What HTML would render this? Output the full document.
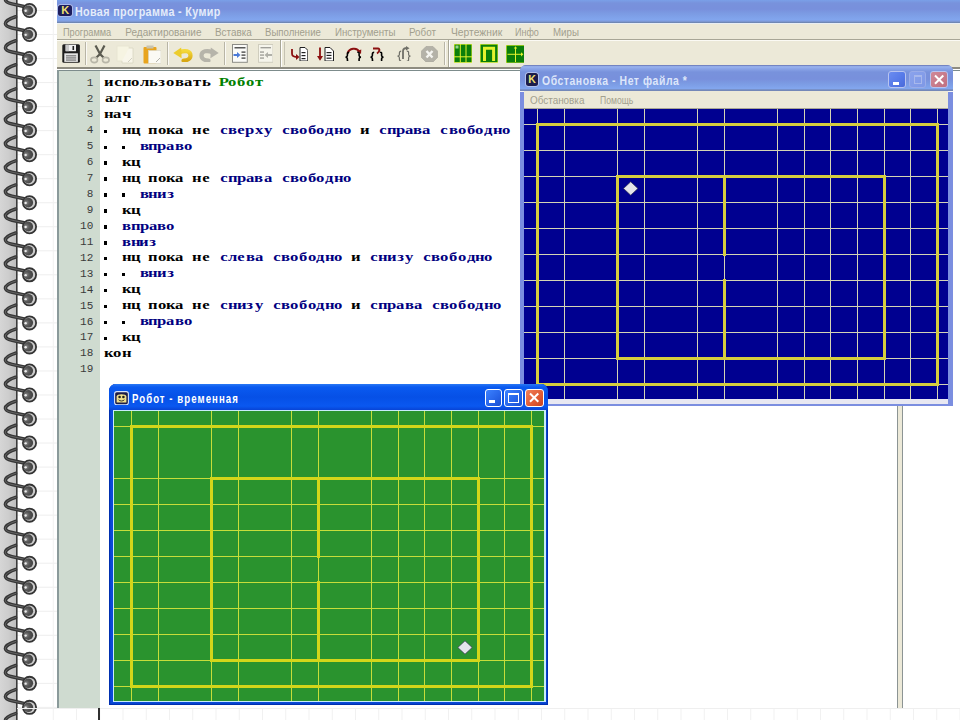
<!DOCTYPE html>
<html><head><meta charset="utf-8">
<style>
html,body{margin:0;padding:0;}
body{width:960px;height:720px;position:relative;overflow:hidden;background:#fff;font-family:"Liberation Sans",sans-serif;}
.a{position:absolute;}
.mt{left:57px;top:0;width:903px;height:23.6px;background:linear-gradient(to bottom,#7aa0e8 0px,#7892dc 3px,#7890dc 9px,#7c9ce4 14px,#82a6ee 20px,#7c96d0 21.6px,#6e86b0 22.6px,#e8eef4 22.7px,#e8eef4 23.6px);}
.ttl{color:#e4ecfa;font-weight:bold;white-space:nowrap;}
.menu{background:#ece9d8;}
.mi{color:#a29f8e;font-size:10px;white-space:nowrap;}
.sx{transform-origin:0 50%;}
.tb{background:#ece9d8;}
.code{font-family:"Liberation Serif",serif;font-weight:bold;font-size:12.8px;white-space:pre;color:#000;}
.c{display:inline-block;width:8.83px;text-align:center;font-style:normal;}
.c b{display:inline-block;transform:scaleX(1.3);font-weight:bold;}
.code div{position:absolute;left:0;height:16px;}
.k{color:#000080;}
.g{color:#008000;}
.ln{font-family:"Liberation Mono",monospace;font-size:11px;color:#3a3a3a;text-align:right;white-space:pre;}
.ln div{position:absolute;right:0;}
.c b.bl{width:3px;height:3.4px;background:#000;vertical-align:1px;transform:none;}
.cb{text-align:left;}
</style></head><body>
<svg width="960" height="720" style="position:absolute;left:0;top:0">
<defs><linearGradient id="gstrip" x1="0" x2="1" y1="0" y2="0"><stop offset="0" stop-color="#d6d6d6"/><stop offset="0.5" stop-color="#cdcdcd"/><stop offset="1" stop-color="#bcbcbc"/></linearGradient><radialGradient id="hole" cx="0.3" cy="0.5" r="0.75"><stop offset="0" stop-color="#8c8c8c"/><stop offset="0.4" stop-color="#585858"/><stop offset="1" stop-color="#3c3c3c"/></radialGradient></defs>
<rect x="0" y="0" width="17" height="720" fill="url(#gstrip)"/>
<rect x="17" y="10" width="943" height="1" fill="#eeeeee"/>
<rect x="17" y="34.03" width="943" height="1" fill="#eeeeee"/>
<rect x="17" y="58.06" width="943" height="1" fill="#eeeeee"/>
<rect x="17" y="82.09" width="943" height="1" fill="#eeeeee"/>
<rect x="17" y="106.12" width="943" height="1" fill="#eeeeee"/>
<rect x="17" y="130.15" width="943" height="1" fill="#eeeeee"/>
<rect x="17" y="154.18" width="943" height="1" fill="#eeeeee"/>
<rect x="17" y="178.21" width="943" height="1" fill="#eeeeee"/>
<rect x="17" y="202.24" width="943" height="1" fill="#eeeeee"/>
<rect x="17" y="226.27" width="943" height="1" fill="#eeeeee"/>
<rect x="17" y="250.3" width="943" height="1" fill="#eeeeee"/>
<rect x="17" y="274.33" width="943" height="1" fill="#eeeeee"/>
<rect x="17" y="298.36" width="943" height="1" fill="#eeeeee"/>
<rect x="17" y="322.39" width="943" height="1" fill="#eeeeee"/>
<rect x="17" y="346.42" width="943" height="1" fill="#eeeeee"/>
<rect x="17" y="370.45" width="943" height="1" fill="#eeeeee"/>
<rect x="17" y="394.48" width="943" height="1" fill="#eeeeee"/>
<rect x="17" y="418.51" width="943" height="1" fill="#eeeeee"/>
<rect x="17" y="442.54" width="943" height="1" fill="#eeeeee"/>
<rect x="17" y="466.57" width="943" height="1" fill="#eeeeee"/>
<rect x="17" y="490.6" width="943" height="1" fill="#eeeeee"/>
<rect x="17" y="514.63" width="943" height="1" fill="#eeeeee"/>
<rect x="17" y="538.66" width="943" height="1" fill="#eeeeee"/>
<rect x="17" y="562.69" width="943" height="1" fill="#eeeeee"/>
<rect x="17" y="586.72" width="943" height="1" fill="#eeeeee"/>
<rect x="17" y="610.75" width="943" height="1" fill="#eeeeee"/>
<rect x="17" y="634.78" width="943" height="1" fill="#eeeeee"/>
<rect x="17" y="658.81" width="943" height="1" fill="#eeeeee"/>
<rect x="17" y="682.84" width="943" height="1" fill="#eeeeee"/>
<rect x="17" y="706.87" width="943" height="1" fill="#eeeeee"/>
<rect x="52.75" y="0" width="1" height="720" fill="#f1f1f1"/>
<rect x="76" y="0" width="1" height="720" fill="#f1f1f1"/>
<rect x="99.25" y="0" width="1" height="720" fill="#f1f1f1"/>
<rect x="122.5" y="0" width="1" height="720" fill="#f1f1f1"/>
<rect x="145.75" y="0" width="1" height="720" fill="#f1f1f1"/>
<rect x="169" y="0" width="1" height="720" fill="#f1f1f1"/>
<rect x="192.25" y="0" width="1" height="720" fill="#f1f1f1"/>
<rect x="215.5" y="0" width="1" height="720" fill="#f1f1f1"/>
<rect x="238.75" y="0" width="1" height="720" fill="#f1f1f1"/>
<rect x="262" y="0" width="1" height="720" fill="#f1f1f1"/>
<rect x="285.25" y="0" width="1" height="720" fill="#f1f1f1"/>
<rect x="308.5" y="0" width="1" height="720" fill="#f1f1f1"/>
<rect x="331.75" y="0" width="1" height="720" fill="#f1f1f1"/>
<rect x="355" y="0" width="1" height="720" fill="#f1f1f1"/>
<rect x="378.25" y="0" width="1" height="720" fill="#f1f1f1"/>
<rect x="401.5" y="0" width="1" height="720" fill="#f1f1f1"/>
<rect x="424.75" y="0" width="1" height="720" fill="#f1f1f1"/>
<rect x="448" y="0" width="1" height="720" fill="#f1f1f1"/>
<rect x="471.25" y="0" width="1" height="720" fill="#f1f1f1"/>
<rect x="494.5" y="0" width="1" height="720" fill="#f1f1f1"/>
<rect x="517.75" y="0" width="1" height="720" fill="#f1f1f1"/>
<rect x="541" y="0" width="1" height="720" fill="#f1f1f1"/>
<rect x="564.25" y="0" width="1" height="720" fill="#f1f1f1"/>
<rect x="587.5" y="0" width="1" height="720" fill="#f1f1f1"/>
<rect x="610.75" y="0" width="1" height="720" fill="#f1f1f1"/>
<rect x="634" y="0" width="1" height="720" fill="#f1f1f1"/>
<rect x="657.25" y="0" width="1" height="720" fill="#f1f1f1"/>
<rect x="680.5" y="0" width="1" height="720" fill="#f1f1f1"/>
<rect x="703.75" y="0" width="1" height="720" fill="#f1f1f1"/>
<rect x="727" y="0" width="1" height="720" fill="#f1f1f1"/>
<rect x="750.25" y="0" width="1" height="720" fill="#f1f1f1"/>
<rect x="773.5" y="0" width="1" height="720" fill="#f1f1f1"/>
<rect x="796.75" y="0" width="1" height="720" fill="#f1f1f1"/>
<rect x="820" y="0" width="1" height="720" fill="#f1f1f1"/>
<rect x="843.25" y="0" width="1" height="720" fill="#f1f1f1"/>
<rect x="866.5" y="0" width="1" height="720" fill="#f1f1f1"/>
<rect x="889.75" y="0" width="1" height="720" fill="#f1f1f1"/>
<rect x="913" y="0" width="1" height="720" fill="#f1f1f1"/>
<rect x="936.25" y="0" width="1" height="720" fill="#f1f1f1"/>
<rect x="959.5" y="0" width="1" height="720" fill="#f1f1f1"/>
<rect x="16" y="0" width="1.6" height="720" fill="#3a3a3a"/>
<path d="M15.6 -7.3 C 11 -5.9, 5.2 -3.1, 5.4 -0.3 C 5.6 2.3, 8.5 3.1, 12 3.9 L 24 6.5" fill="none" stroke="#363636" stroke-width="3.5" stroke-linecap="round"/>
<path d="M15.6 -7.3 C 11 -5.9, 5.2 -3.1, 5.4 -0.3 C 5.6 2.3, 8.5 3.1, 12 3.9 L 24 6.5" fill="none" stroke="#7a7a7a" stroke-width="0.7" stroke-linecap="round"/>
<circle cx="29.5" cy="10.5" r="6.6" fill="#cccccc" stroke="#343434" stroke-width="1.8"/>
<circle cx="28.3" cy="10.4" r="4.8" fill="url(#hole)"/>
<circle cx="25.6" cy="10.8" r="1.2" fill="#ececec"/>
<path d="M15.6 16.73 C 11 18.13, 5.2 20.93, 5.4 23.73 C 5.6 26.33, 8.5 27.13, 12 27.93 L 24 30.53" fill="none" stroke="#363636" stroke-width="3.5" stroke-linecap="round"/>
<path d="M15.6 16.73 C 11 18.13, 5.2 20.93, 5.4 23.73 C 5.6 26.33, 8.5 27.13, 12 27.93 L 24 30.53" fill="none" stroke="#7a7a7a" stroke-width="0.7" stroke-linecap="round"/>
<circle cx="29.5" cy="34.53" r="6.6" fill="#cccccc" stroke="#343434" stroke-width="1.8"/>
<circle cx="28.3" cy="34.43" r="4.8" fill="url(#hole)"/>
<circle cx="25.6" cy="34.83" r="1.2" fill="#ececec"/>
<path d="M15.6 40.76 C 11 42.16, 5.2 44.96, 5.4 47.76 C 5.6 50.36, 8.5 51.16, 12 51.96 L 24 54.56" fill="none" stroke="#363636" stroke-width="3.5" stroke-linecap="round"/>
<path d="M15.6 40.76 C 11 42.16, 5.2 44.96, 5.4 47.76 C 5.6 50.36, 8.5 51.16, 12 51.96 L 24 54.56" fill="none" stroke="#7a7a7a" stroke-width="0.7" stroke-linecap="round"/>
<circle cx="29.5" cy="58.56" r="6.6" fill="#cccccc" stroke="#343434" stroke-width="1.8"/>
<circle cx="28.3" cy="58.46" r="4.8" fill="url(#hole)"/>
<circle cx="25.6" cy="58.86" r="1.2" fill="#ececec"/>
<path d="M15.6 64.79 C 11 66.19, 5.2 68.99, 5.4 71.79 C 5.6 74.39, 8.5 75.19, 12 75.99 L 24 78.59" fill="none" stroke="#363636" stroke-width="3.5" stroke-linecap="round"/>
<path d="M15.6 64.79 C 11 66.19, 5.2 68.99, 5.4 71.79 C 5.6 74.39, 8.5 75.19, 12 75.99 L 24 78.59" fill="none" stroke="#7a7a7a" stroke-width="0.7" stroke-linecap="round"/>
<circle cx="29.5" cy="82.59" r="6.6" fill="#cccccc" stroke="#343434" stroke-width="1.8"/>
<circle cx="28.3" cy="82.49" r="4.8" fill="url(#hole)"/>
<circle cx="25.6" cy="82.89" r="1.2" fill="#ececec"/>
<path d="M15.6 88.82 C 11 90.22, 5.2 93.02, 5.4 95.82 C 5.6 98.42, 8.5 99.22, 12 100.02 L 24 102.62" fill="none" stroke="#363636" stroke-width="3.5" stroke-linecap="round"/>
<path d="M15.6 88.82 C 11 90.22, 5.2 93.02, 5.4 95.82 C 5.6 98.42, 8.5 99.22, 12 100.02 L 24 102.62" fill="none" stroke="#7a7a7a" stroke-width="0.7" stroke-linecap="round"/>
<circle cx="29.5" cy="106.62" r="6.6" fill="#cccccc" stroke="#343434" stroke-width="1.8"/>
<circle cx="28.3" cy="106.52" r="4.8" fill="url(#hole)"/>
<circle cx="25.6" cy="106.92" r="1.2" fill="#ececec"/>
<path d="M15.6 112.85 C 11 114.25, 5.2 117.05, 5.4 119.85 C 5.6 122.45, 8.5 123.25, 12 124.05 L 24 126.65" fill="none" stroke="#363636" stroke-width="3.5" stroke-linecap="round"/>
<path d="M15.6 112.85 C 11 114.25, 5.2 117.05, 5.4 119.85 C 5.6 122.45, 8.5 123.25, 12 124.05 L 24 126.65" fill="none" stroke="#7a7a7a" stroke-width="0.7" stroke-linecap="round"/>
<circle cx="29.5" cy="130.65" r="6.6" fill="#cccccc" stroke="#343434" stroke-width="1.8"/>
<circle cx="28.3" cy="130.55" r="4.8" fill="url(#hole)"/>
<circle cx="25.6" cy="130.95" r="1.2" fill="#ececec"/>
<path d="M15.6 136.88 C 11 138.28, 5.2 141.08, 5.4 143.88 C 5.6 146.48, 8.5 147.28, 12 148.08 L 24 150.68" fill="none" stroke="#363636" stroke-width="3.5" stroke-linecap="round"/>
<path d="M15.6 136.88 C 11 138.28, 5.2 141.08, 5.4 143.88 C 5.6 146.48, 8.5 147.28, 12 148.08 L 24 150.68" fill="none" stroke="#7a7a7a" stroke-width="0.7" stroke-linecap="round"/>
<circle cx="29.5" cy="154.68" r="6.6" fill="#cccccc" stroke="#343434" stroke-width="1.8"/>
<circle cx="28.3" cy="154.58" r="4.8" fill="url(#hole)"/>
<circle cx="25.6" cy="154.98" r="1.2" fill="#ececec"/>
<path d="M15.6 160.91 C 11 162.31, 5.2 165.11, 5.4 167.91 C 5.6 170.51, 8.5 171.31, 12 172.11 L 24 174.71" fill="none" stroke="#363636" stroke-width="3.5" stroke-linecap="round"/>
<path d="M15.6 160.91 C 11 162.31, 5.2 165.11, 5.4 167.91 C 5.6 170.51, 8.5 171.31, 12 172.11 L 24 174.71" fill="none" stroke="#7a7a7a" stroke-width="0.7" stroke-linecap="round"/>
<circle cx="29.5" cy="178.71" r="6.6" fill="#cccccc" stroke="#343434" stroke-width="1.8"/>
<circle cx="28.3" cy="178.61" r="4.8" fill="url(#hole)"/>
<circle cx="25.6" cy="179.01" r="1.2" fill="#ececec"/>
<path d="M15.6 184.94 C 11 186.34, 5.2 189.14, 5.4 191.94 C 5.6 194.54, 8.5 195.34, 12 196.14 L 24 198.74" fill="none" stroke="#363636" stroke-width="3.5" stroke-linecap="round"/>
<path d="M15.6 184.94 C 11 186.34, 5.2 189.14, 5.4 191.94 C 5.6 194.54, 8.5 195.34, 12 196.14 L 24 198.74" fill="none" stroke="#7a7a7a" stroke-width="0.7" stroke-linecap="round"/>
<circle cx="29.5" cy="202.74" r="6.6" fill="#cccccc" stroke="#343434" stroke-width="1.8"/>
<circle cx="28.3" cy="202.64" r="4.8" fill="url(#hole)"/>
<circle cx="25.6" cy="203.04" r="1.2" fill="#ececec"/>
<path d="M15.6 208.97 C 11 210.37, 5.2 213.17, 5.4 215.97 C 5.6 218.57, 8.5 219.37, 12 220.17 L 24 222.77" fill="none" stroke="#363636" stroke-width="3.5" stroke-linecap="round"/>
<path d="M15.6 208.97 C 11 210.37, 5.2 213.17, 5.4 215.97 C 5.6 218.57, 8.5 219.37, 12 220.17 L 24 222.77" fill="none" stroke="#7a7a7a" stroke-width="0.7" stroke-linecap="round"/>
<circle cx="29.5" cy="226.77" r="6.6" fill="#cccccc" stroke="#343434" stroke-width="1.8"/>
<circle cx="28.3" cy="226.67" r="4.8" fill="url(#hole)"/>
<circle cx="25.6" cy="227.07" r="1.2" fill="#ececec"/>
<path d="M15.6 233 C 11 234.4, 5.2 237.2, 5.4 240 C 5.6 242.6, 8.5 243.4, 12 244.2 L 24 246.8" fill="none" stroke="#363636" stroke-width="3.5" stroke-linecap="round"/>
<path d="M15.6 233 C 11 234.4, 5.2 237.2, 5.4 240 C 5.6 242.6, 8.5 243.4, 12 244.2 L 24 246.8" fill="none" stroke="#7a7a7a" stroke-width="0.7" stroke-linecap="round"/>
<circle cx="29.5" cy="250.8" r="6.6" fill="#cccccc" stroke="#343434" stroke-width="1.8"/>
<circle cx="28.3" cy="250.7" r="4.8" fill="url(#hole)"/>
<circle cx="25.6" cy="251.1" r="1.2" fill="#ececec"/>
<path d="M15.6 257.03 C 11 258.43, 5.2 261.23, 5.4 264.03 C 5.6 266.63, 8.5 267.43, 12 268.23 L 24 270.83" fill="none" stroke="#363636" stroke-width="3.5" stroke-linecap="round"/>
<path d="M15.6 257.03 C 11 258.43, 5.2 261.23, 5.4 264.03 C 5.6 266.63, 8.5 267.43, 12 268.23 L 24 270.83" fill="none" stroke="#7a7a7a" stroke-width="0.7" stroke-linecap="round"/>
<circle cx="29.5" cy="274.83" r="6.6" fill="#cccccc" stroke="#343434" stroke-width="1.8"/>
<circle cx="28.3" cy="274.73" r="4.8" fill="url(#hole)"/>
<circle cx="25.6" cy="275.13" r="1.2" fill="#ececec"/>
<path d="M15.6 281.06 C 11 282.46, 5.2 285.26, 5.4 288.06 C 5.6 290.66, 8.5 291.46, 12 292.26 L 24 294.86" fill="none" stroke="#363636" stroke-width="3.5" stroke-linecap="round"/>
<path d="M15.6 281.06 C 11 282.46, 5.2 285.26, 5.4 288.06 C 5.6 290.66, 8.5 291.46, 12 292.26 L 24 294.86" fill="none" stroke="#7a7a7a" stroke-width="0.7" stroke-linecap="round"/>
<circle cx="29.5" cy="298.86" r="6.6" fill="#cccccc" stroke="#343434" stroke-width="1.8"/>
<circle cx="28.3" cy="298.76" r="4.8" fill="url(#hole)"/>
<circle cx="25.6" cy="299.16" r="1.2" fill="#ececec"/>
<path d="M15.6 305.09 C 11 306.49, 5.2 309.29, 5.4 312.09 C 5.6 314.69, 8.5 315.49, 12 316.29 L 24 318.89" fill="none" stroke="#363636" stroke-width="3.5" stroke-linecap="round"/>
<path d="M15.6 305.09 C 11 306.49, 5.2 309.29, 5.4 312.09 C 5.6 314.69, 8.5 315.49, 12 316.29 L 24 318.89" fill="none" stroke="#7a7a7a" stroke-width="0.7" stroke-linecap="round"/>
<circle cx="29.5" cy="322.89" r="6.6" fill="#cccccc" stroke="#343434" stroke-width="1.8"/>
<circle cx="28.3" cy="322.79" r="4.8" fill="url(#hole)"/>
<circle cx="25.6" cy="323.19" r="1.2" fill="#ececec"/>
<path d="M15.6 329.12 C 11 330.52, 5.2 333.32, 5.4 336.12 C 5.6 338.72, 8.5 339.52, 12 340.32 L 24 342.92" fill="none" stroke="#363636" stroke-width="3.5" stroke-linecap="round"/>
<path d="M15.6 329.12 C 11 330.52, 5.2 333.32, 5.4 336.12 C 5.6 338.72, 8.5 339.52, 12 340.32 L 24 342.92" fill="none" stroke="#7a7a7a" stroke-width="0.7" stroke-linecap="round"/>
<circle cx="29.5" cy="346.92" r="6.6" fill="#cccccc" stroke="#343434" stroke-width="1.8"/>
<circle cx="28.3" cy="346.82" r="4.8" fill="url(#hole)"/>
<circle cx="25.6" cy="347.22" r="1.2" fill="#ececec"/>
<path d="M15.6 353.15 C 11 354.55, 5.2 357.35, 5.4 360.15 C 5.6 362.75, 8.5 363.55, 12 364.35 L 24 366.95" fill="none" stroke="#363636" stroke-width="3.5" stroke-linecap="round"/>
<path d="M15.6 353.15 C 11 354.55, 5.2 357.35, 5.4 360.15 C 5.6 362.75, 8.5 363.55, 12 364.35 L 24 366.95" fill="none" stroke="#7a7a7a" stroke-width="0.7" stroke-linecap="round"/>
<circle cx="29.5" cy="370.95" r="6.6" fill="#cccccc" stroke="#343434" stroke-width="1.8"/>
<circle cx="28.3" cy="370.85" r="4.8" fill="url(#hole)"/>
<circle cx="25.6" cy="371.25" r="1.2" fill="#ececec"/>
<path d="M15.6 377.18 C 11 378.58, 5.2 381.38, 5.4 384.18 C 5.6 386.78, 8.5 387.58, 12 388.38 L 24 390.98" fill="none" stroke="#363636" stroke-width="3.5" stroke-linecap="round"/>
<path d="M15.6 377.18 C 11 378.58, 5.2 381.38, 5.4 384.18 C 5.6 386.78, 8.5 387.58, 12 388.38 L 24 390.98" fill="none" stroke="#7a7a7a" stroke-width="0.7" stroke-linecap="round"/>
<circle cx="29.5" cy="394.98" r="6.6" fill="#cccccc" stroke="#343434" stroke-width="1.8"/>
<circle cx="28.3" cy="394.88" r="4.8" fill="url(#hole)"/>
<circle cx="25.6" cy="395.28" r="1.2" fill="#ececec"/>
<path d="M15.6 401.21 C 11 402.61, 5.2 405.41, 5.4 408.21 C 5.6 410.81, 8.5 411.61, 12 412.41 L 24 415.01" fill="none" stroke="#363636" stroke-width="3.5" stroke-linecap="round"/>
<path d="M15.6 401.21 C 11 402.61, 5.2 405.41, 5.4 408.21 C 5.6 410.81, 8.5 411.61, 12 412.41 L 24 415.01" fill="none" stroke="#7a7a7a" stroke-width="0.7" stroke-linecap="round"/>
<circle cx="29.5" cy="419.01" r="6.6" fill="#cccccc" stroke="#343434" stroke-width="1.8"/>
<circle cx="28.3" cy="418.91" r="4.8" fill="url(#hole)"/>
<circle cx="25.6" cy="419.31" r="1.2" fill="#ececec"/>
<path d="M15.6 425.24 C 11 426.64, 5.2 429.44, 5.4 432.24 C 5.6 434.84, 8.5 435.64, 12 436.44 L 24 439.04" fill="none" stroke="#363636" stroke-width="3.5" stroke-linecap="round"/>
<path d="M15.6 425.24 C 11 426.64, 5.2 429.44, 5.4 432.24 C 5.6 434.84, 8.5 435.64, 12 436.44 L 24 439.04" fill="none" stroke="#7a7a7a" stroke-width="0.7" stroke-linecap="round"/>
<circle cx="29.5" cy="443.04" r="6.6" fill="#cccccc" stroke="#343434" stroke-width="1.8"/>
<circle cx="28.3" cy="442.94" r="4.8" fill="url(#hole)"/>
<circle cx="25.6" cy="443.34" r="1.2" fill="#ececec"/>
<path d="M15.6 449.27 C 11 450.67, 5.2 453.47, 5.4 456.27 C 5.6 458.87, 8.5 459.67, 12 460.47 L 24 463.07" fill="none" stroke="#363636" stroke-width="3.5" stroke-linecap="round"/>
<path d="M15.6 449.27 C 11 450.67, 5.2 453.47, 5.4 456.27 C 5.6 458.87, 8.5 459.67, 12 460.47 L 24 463.07" fill="none" stroke="#7a7a7a" stroke-width="0.7" stroke-linecap="round"/>
<circle cx="29.5" cy="467.07" r="6.6" fill="#cccccc" stroke="#343434" stroke-width="1.8"/>
<circle cx="28.3" cy="466.97" r="4.8" fill="url(#hole)"/>
<circle cx="25.6" cy="467.37" r="1.2" fill="#ececec"/>
<path d="M15.6 473.3 C 11 474.7, 5.2 477.5, 5.4 480.3 C 5.6 482.9, 8.5 483.7, 12 484.5 L 24 487.1" fill="none" stroke="#363636" stroke-width="3.5" stroke-linecap="round"/>
<path d="M15.6 473.3 C 11 474.7, 5.2 477.5, 5.4 480.3 C 5.6 482.9, 8.5 483.7, 12 484.5 L 24 487.1" fill="none" stroke="#7a7a7a" stroke-width="0.7" stroke-linecap="round"/>
<circle cx="29.5" cy="491.1" r="6.6" fill="#cccccc" stroke="#343434" stroke-width="1.8"/>
<circle cx="28.3" cy="491" r="4.8" fill="url(#hole)"/>
<circle cx="25.6" cy="491.4" r="1.2" fill="#ececec"/>
<path d="M15.6 497.33 C 11 498.73, 5.2 501.53, 5.4 504.33 C 5.6 506.93, 8.5 507.73, 12 508.53 L 24 511.13" fill="none" stroke="#363636" stroke-width="3.5" stroke-linecap="round"/>
<path d="M15.6 497.33 C 11 498.73, 5.2 501.53, 5.4 504.33 C 5.6 506.93, 8.5 507.73, 12 508.53 L 24 511.13" fill="none" stroke="#7a7a7a" stroke-width="0.7" stroke-linecap="round"/>
<circle cx="29.5" cy="515.13" r="6.6" fill="#cccccc" stroke="#343434" stroke-width="1.8"/>
<circle cx="28.3" cy="515.03" r="4.8" fill="url(#hole)"/>
<circle cx="25.6" cy="515.43" r="1.2" fill="#ececec"/>
<path d="M15.6 521.36 C 11 522.76, 5.2 525.56, 5.4 528.36 C 5.6 530.96, 8.5 531.76, 12 532.56 L 24 535.16" fill="none" stroke="#363636" stroke-width="3.5" stroke-linecap="round"/>
<path d="M15.6 521.36 C 11 522.76, 5.2 525.56, 5.4 528.36 C 5.6 530.96, 8.5 531.76, 12 532.56 L 24 535.16" fill="none" stroke="#7a7a7a" stroke-width="0.7" stroke-linecap="round"/>
<circle cx="29.5" cy="539.16" r="6.6" fill="#cccccc" stroke="#343434" stroke-width="1.8"/>
<circle cx="28.3" cy="539.06" r="4.8" fill="url(#hole)"/>
<circle cx="25.6" cy="539.46" r="1.2" fill="#ececec"/>
<path d="M15.6 545.39 C 11 546.79, 5.2 549.59, 5.4 552.39 C 5.6 554.99, 8.5 555.79, 12 556.59 L 24 559.19" fill="none" stroke="#363636" stroke-width="3.5" stroke-linecap="round"/>
<path d="M15.6 545.39 C 11 546.79, 5.2 549.59, 5.4 552.39 C 5.6 554.99, 8.5 555.79, 12 556.59 L 24 559.19" fill="none" stroke="#7a7a7a" stroke-width="0.7" stroke-linecap="round"/>
<circle cx="29.5" cy="563.19" r="6.6" fill="#cccccc" stroke="#343434" stroke-width="1.8"/>
<circle cx="28.3" cy="563.09" r="4.8" fill="url(#hole)"/>
<circle cx="25.6" cy="563.49" r="1.2" fill="#ececec"/>
<path d="M15.6 569.42 C 11 570.82, 5.2 573.62, 5.4 576.42 C 5.6 579.02, 8.5 579.82, 12 580.62 L 24 583.22" fill="none" stroke="#363636" stroke-width="3.5" stroke-linecap="round"/>
<path d="M15.6 569.42 C 11 570.82, 5.2 573.62, 5.4 576.42 C 5.6 579.02, 8.5 579.82, 12 580.62 L 24 583.22" fill="none" stroke="#7a7a7a" stroke-width="0.7" stroke-linecap="round"/>
<circle cx="29.5" cy="587.22" r="6.6" fill="#cccccc" stroke="#343434" stroke-width="1.8"/>
<circle cx="28.3" cy="587.12" r="4.8" fill="url(#hole)"/>
<circle cx="25.6" cy="587.52" r="1.2" fill="#ececec"/>
<path d="M15.6 593.45 C 11 594.85, 5.2 597.65, 5.4 600.45 C 5.6 603.05, 8.5 603.85, 12 604.65 L 24 607.25" fill="none" stroke="#363636" stroke-width="3.5" stroke-linecap="round"/>
<path d="M15.6 593.45 C 11 594.85, 5.2 597.65, 5.4 600.45 C 5.6 603.05, 8.5 603.85, 12 604.65 L 24 607.25" fill="none" stroke="#7a7a7a" stroke-width="0.7" stroke-linecap="round"/>
<circle cx="29.5" cy="611.25" r="6.6" fill="#cccccc" stroke="#343434" stroke-width="1.8"/>
<circle cx="28.3" cy="611.15" r="4.8" fill="url(#hole)"/>
<circle cx="25.6" cy="611.55" r="1.2" fill="#ececec"/>
<path d="M15.6 617.48 C 11 618.88, 5.2 621.68, 5.4 624.48 C 5.6 627.08, 8.5 627.88, 12 628.68 L 24 631.28" fill="none" stroke="#363636" stroke-width="3.5" stroke-linecap="round"/>
<path d="M15.6 617.48 C 11 618.88, 5.2 621.68, 5.4 624.48 C 5.6 627.08, 8.5 627.88, 12 628.68 L 24 631.28" fill="none" stroke="#7a7a7a" stroke-width="0.7" stroke-linecap="round"/>
<circle cx="29.5" cy="635.28" r="6.6" fill="#cccccc" stroke="#343434" stroke-width="1.8"/>
<circle cx="28.3" cy="635.18" r="4.8" fill="url(#hole)"/>
<circle cx="25.6" cy="635.58" r="1.2" fill="#ececec"/>
<path d="M15.6 641.51 C 11 642.91, 5.2 645.71, 5.4 648.51 C 5.6 651.11, 8.5 651.91, 12 652.71 L 24 655.31" fill="none" stroke="#363636" stroke-width="3.5" stroke-linecap="round"/>
<path d="M15.6 641.51 C 11 642.91, 5.2 645.71, 5.4 648.51 C 5.6 651.11, 8.5 651.91, 12 652.71 L 24 655.31" fill="none" stroke="#7a7a7a" stroke-width="0.7" stroke-linecap="round"/>
<circle cx="29.5" cy="659.31" r="6.6" fill="#cccccc" stroke="#343434" stroke-width="1.8"/>
<circle cx="28.3" cy="659.21" r="4.8" fill="url(#hole)"/>
<circle cx="25.6" cy="659.61" r="1.2" fill="#ececec"/>
<path d="M15.6 665.54 C 11 666.94, 5.2 669.74, 5.4 672.54 C 5.6 675.14, 8.5 675.94, 12 676.74 L 24 679.34" fill="none" stroke="#363636" stroke-width="3.5" stroke-linecap="round"/>
<path d="M15.6 665.54 C 11 666.94, 5.2 669.74, 5.4 672.54 C 5.6 675.14, 8.5 675.94, 12 676.74 L 24 679.34" fill="none" stroke="#7a7a7a" stroke-width="0.7" stroke-linecap="round"/>
<circle cx="29.5" cy="683.34" r="6.6" fill="#cccccc" stroke="#343434" stroke-width="1.8"/>
<circle cx="28.3" cy="683.24" r="4.8" fill="url(#hole)"/>
<circle cx="25.6" cy="683.64" r="1.2" fill="#ececec"/>
<path d="M15.6 689.57 C 11 690.97, 5.2 693.77, 5.4 696.57 C 5.6 699.17, 8.5 699.97, 12 700.77 L 24 703.37" fill="none" stroke="#363636" stroke-width="3.5" stroke-linecap="round"/>
<path d="M15.6 689.57 C 11 690.97, 5.2 693.77, 5.4 696.57 C 5.6 699.17, 8.5 699.97, 12 700.77 L 24 703.37" fill="none" stroke="#7a7a7a" stroke-width="0.7" stroke-linecap="round"/>
<circle cx="29.5" cy="707.37" r="6.6" fill="#cccccc" stroke="#343434" stroke-width="1.8"/>
<circle cx="28.3" cy="707.27" r="4.8" fill="url(#hole)"/>
<circle cx="25.6" cy="707.67" r="1.2" fill="#ececec"/>
<path d="M15.6 713.6 C 11 715, 5.2 717.8, 5.4 720.6 C 5.6 723.2, 8.5 724, 12 724.8 L 24 727.4" fill="none" stroke="#363636" stroke-width="3.5" stroke-linecap="round"/>
<path d="M15.6 713.6 C 11 715, 5.2 717.8, 5.4 720.6 C 5.6 723.2, 8.5 724, 12 724.8 L 24 727.4" fill="none" stroke="#7a7a7a" stroke-width="0.7" stroke-linecap="round"/>
<circle cx="29.5" cy="731.4" r="6.6" fill="#cccccc" stroke="#343434" stroke-width="1.8"/>
<circle cx="28.3" cy="731.3" r="4.8" fill="url(#hole)"/>
<circle cx="25.6" cy="731.7" r="1.2" fill="#ececec"/>
</svg>

<!-- main window -->
<div class="a mt"></div>
<div class="a" style="left:58.4px;top:4.7px;width:13.9px;height:11.8px;background:#1c1c5c;border-radius:2.5px;box-shadow:0 0 0 0.8px #b8c4ec;"></div>
<div class="a" style="left:58.4px;top:3.6px;width:13.9px;text-align:center;font-size:11px;font-weight:bold;color:#f0e070;">K</div>

<div class="a menu" style="left:57px;top:23.6px;width:903px;height:15px;">
</div>
<div class="a" style="left:57px;top:38.5px;width:903px;height:1px;background:#a8a696;"></div>
<div class="a" style="left:57px;top:39.5px;width:903px;height:1px;background:#fbfaf4;"></div>

<div class="a tb" style="left:57px;top:40.5px;width:903px;height:27px;"></div>
<svg class="a" style="left:61.9px;top:44px" width="18.2" height="19" viewBox="0 0 18.2 19"><rect x="0.3" y="0.3" width="17.6" height="18.4" rx="1.5" fill="#1e1e1e"/><rect x="3.6" y="0.8" width="10.4" height="6.4" fill="#f0f0f0"/><rect x="3.6" y="0.8" width="3.4" height="6.4" fill="#c8c8c8"/><rect x="10.5" y="2" width="1.6" height="4" fill="#1e1e1e"/><rect x="2.3" y="9.3" width="13.6" height="8.6" fill="#e6e6e6"/><rect x="4" y="11.4" width="10.2" height="0.9" fill="#505050"/><rect x="4" y="13.5" width="10.2" height="0.9" fill="#505050"/><rect x="4" y="15.6" width="10.2" height="0.9" fill="#505050"/></svg>
<div class="a" style="left:84.8px;top:42px;width:1px;height:23px;background:#b8b5a6;"></div><div class="a" style="left:85.8px;top:42px;width:1px;height:23px;background:#fbfaf6;"></div>
<svg class="a" style="left:90px;top:44.9px" width="20" height="18.7" viewBox="0 0 20 18.7"><path d="M5.5 0.5 L10 9 L14.5 0.5" fill="none" stroke="#5a5a50" stroke-width="2.2"/><path d="M10 9 L6 13 M10 9 L14 13" stroke="#5a5a50" stroke-width="2.2"/><ellipse cx="4.2" cy="15" rx="3.3" ry="2.6" fill="none" stroke="#b8b6a8" stroke-width="1.6"/><ellipse cx="15.8" cy="15" rx="3.3" ry="2.6" fill="none" stroke="#b8b6a8" stroke-width="1.6"/></svg>
<svg class="a" style="left:116px;top:44.5px" width="19" height="19" viewBox="0 0 19 19"><rect x="1" y="1" width="12" height="15" fill="#f6f4e2" stroke="#e6e3d0" stroke-width="0.8"/><path d="M13 3 L17 3 L17 18 L6 18 L6 16" fill="#f8f6ea" stroke="#d8d5c2" stroke-width="0.8"/><path d="M12 17 L16 13" stroke="#c8c6b6" stroke-width="0.8"/></svg>
<svg class="a" style="left:142.5px;top:44.5px" width="18.5" height="19" viewBox="0 0 18.5 19"><rect x="0.5" y="2" width="13" height="16.5" rx="1" fill="#e8a41e"/><rect x="3.5" y="0.5" width="7" height="3" fill="#c8c4b0"/><rect x="5.5" y="5.5" width="12.5" height="13" fill="#fbfaf4" stroke="#d8d6c6" stroke-width="0.6"/><path d="M13 17 L17 13" stroke="#a0a098" stroke-width="0.8"/></svg>
<div class="a" style="left:167px;top:42px;width:1px;height:23px;background:#b8b5a6;"></div><div class="a" style="left:168px;top:42px;width:1px;height:23px;background:#fbfaf6;"></div>
<svg class="a" style="left:172.5px;top:46.5px" width="20.5" height="15.5" viewBox="0 0 20.5 15.5"><defs><linearGradient id="ug" x1="0" y1="0" x2="0" y2="1"><stop offset="0" stop-color="#f4d83a"/><stop offset="1" stop-color="#d8a814"/></linearGradient></defs><path d="M6.5 5.2 C 12 3, 17.5 4, 17.5 8.5 C 17.5 12, 14 13.5, 10.5 13.5" fill="none" stroke="url(#ug)" stroke-width="4.2" stroke-linecap="round"/><path d="M0.3 6 L8.2 0.6 L8.6 11.2 Z" fill="#eccc2c"/></svg>
<svg class="a" style="left:198.75px;top:46.5px" width="20" height="15.5" viewBox="0 0 20 15.5"><path d="M13.5 5.2 C 8 3, 2.5 4, 2.5 8.5 C 2.5 12, 6 13.5, 9.5 13.5" fill="none" stroke="#b6b4aa" stroke-width="4.2" stroke-linecap="round"/><path d="M19.7 6 L11.8 0.6 L11.4 11.2 Z" fill="#b6b4aa"/></svg>
<div class="a" style="left:224.25px;top:42px;width:1px;height:23px;background:#b8b5a6;"></div><div class="a" style="left:225.25px;top:42px;width:1px;height:23px;background:#fbfaf6;"></div>
<svg class="a" style="left:231.9px;top:44.25px" width="15.8" height="18.8" viewBox="0 0 15.8 18.8"><rect x="0.5" y="0.5" width="14.8" height="17.8" fill="#fbfbf8" stroke="#8c8c86" stroke-width="1"/><rect x="2.5" y="3.2" width="11" height="1.2" fill="#303030"/><rect x="9.5" y="7.5" width="4" height="1.2" fill="#303030"/><rect x="9.5" y="10.5" width="4" height="1.2" fill="#303030"/><rect x="9.5" y="13.5" width="4" height="1.2" fill="#303030"/><path d="M1.5 11 L6 11" stroke="#4a7ad8" stroke-width="2"/><path d="M5 8 L8.5 11 L5 14 Z" fill="#4a7ad8"/></svg>
<svg class="a" style="left:257.5px;top:44.25px" width="15.5" height="18.8" viewBox="0 0 15.5 18.8"><rect x="0.5" y="0.5" width="14.5" height="17.8" fill="#f6f5ec" stroke="#cfcdbe" stroke-width="1"/><rect x="2.5" y="3.2" width="10.5" height="1.1" fill="#8a8a84"/><rect x="2" y="7.5" width="4" height="1.1" fill="#8a8a84"/><rect x="2" y="10.5" width="4" height="1.1" fill="#8a8a84"/><rect x="2" y="13.5" width="4" height="1.1" fill="#8a8a84"/><path d="M9 11 L14 11" stroke="#b0b0a8" stroke-width="2"/><path d="M10 8 L6.5 11 L10 14 Z" fill="#b0b0a8"/></svg>
<div class="a" style="left:279.5px;top:40px;width:1px;height:27px;background:#a8a696;"></div><div class="a" style="left:280.5px;top:40px;width:1px;height:27px;background:#fff;"></div>
<div class="a" style="left:284px;top:42px;width:1px;height:23px;background:#c5c2b2;"></div>
<svg class="a" style="left:290.6px;top:46.5px" width="17.5" height="14.5" viewBox="0 0 17.5 14.5"><path d="M1 2 L1 6.5 C1 9, 3 10, 6 10" fill="none" stroke="#8c1010" stroke-width="1.8"/><path d="M5 7 L8.5 10 L5 13 Z" fill="#8c1010"/><path d="M9 0.5 L14 0.5 L16.8 3.3 L16.8 14 L9 14 Z" fill="#fff" stroke="#202020" stroke-width="1"/><rect x="10.5" y="5" width="4" height="1.2" fill="#202020"/><rect x="10.5" y="8" width="4" height="1.2" fill="#202020"/><rect x="10.5" y="11" width="4" height="1.2" fill="#202020"/></svg>
<svg class="a" style="left:316.9px;top:46.5px" width="17" height="14.5" viewBox="0 0 17 14.5"><path d="M3 0.5 L3 11" stroke="#8c1010" stroke-width="1.8"/><path d="M0 9 L3 13.8 L6 9 Z" fill="#8c1010"/><path d="M8 0.5 L13 0.5 L16.5 4 L16.5 14 L8 14 Z" fill="#fff" stroke="#202020" stroke-width="1"/><rect x="9.5" y="5" width="5" height="1.2" fill="#202020"/><rect x="9.5" y="7.8" width="5" height="1.2" fill="#202020"/><rect x="9.5" y="10.6" width="5" height="1.2" fill="#202020"/></svg>
<svg class="a" style="left:345px;top:46.5px" width="16.5" height="14.5" viewBox="0 0 16.5 14.5"><path d="M2.5 6.5 C 4 1, 12 0, 14.5 5" fill="none" stroke="#8c1010" stroke-width="2"/><path d="M12 4 L16 7 L16.3 2.5 Z" fill="#8c1010"/><path d="M4.2 5.2 C2.6 5.2,2.4 5.8,2.4 7.2 L2.4 8.6 C2.4 9.6,1.8 10,0.6 10.2 C1.8 10.4,2.4 10.8,2.4 11.8 L2.4 13 C2.4 14.4,2.6 15,4.2 15" fill="none" stroke="#000" stroke-width="1.6"/><path d="M12.3 5.2 C14.299999999999999 5.2,14.1 5.8,14.1 7.2 L14.1 8.6 C14.1 9.6,14.7 10,15.9 10.2 C14.7 10.4,14.1 10.8,14.1 11.8 L14.1 13 C14.1 14.4,14.299999999999999 15,12.3 15" fill="none" stroke="#000" stroke-width="1.6"/></svg>
<svg class="a" style="left:370px;top:46.5px" width="14" height="14.5" viewBox="0 0 14 14.5"><path d="M3 1.5 L8 1.5 C 10 1.5, 10 4.5, 7 6.5" fill="none" stroke="#8c1010" stroke-width="2"/><path d="M4.2 5.2 C2.6 5.2,2.4 5.8,2.4 7.2 L2.4 8.6 C2.4 9.6,1.8 10,0.6 10.2 C1.8 10.4,2.4 10.8,2.4 11.8 L2.4 13 C2.4 14.4,2.6 15,4.2 15" fill="none" stroke="#000" stroke-width="1.6"/><path d="M9.8 5.2 C11.799999999999999 5.2,11.6 5.8,11.6 7.2 L11.6 8.6 C11.6 9.6,12.2 10,13.4 10.2 C12.2 10.4,11.6 10.8,11.6 11.8 L11.6 13 C11.6 14.4,11.799999999999999 15,9.8 15" fill="none" stroke="#000" stroke-width="1.6"/></svg>
<svg class="a" style="left:396.9px;top:45.5px" width="14" height="15.5" viewBox="0 0 14 15.5"><path d="M4.2 5.2 C2.6 5.2,2.4 5.8,2.4 7.2 L2.4 8.6 C2.4 9.6,1.8 10,0.6 10.2 C1.8 10.4,2.4 10.8,2.4 11.8 L2.4 13 C2.4 14.4,2.6 15,4.2 15" fill="none" stroke="#707068" stroke-width="1.2"/><path d="M9.8 5.2 C11.799999999999999 5.2,11.6 5.8,11.6 7.2 L11.6 8.6 C11.6 9.6,12.2 10,13.4 10.2 C12.2 10.4,11.6 10.8,11.6 11.8 L11.6 13 C11.6 14.4,11.799999999999999 15,9.8 15" fill="none" stroke="#707068" stroke-width="1.2"/><path d="M6 13 L6 5 C6 2.5, 8 2, 10 2" fill="none" stroke="#707068" stroke-width="1.8"/><path d="M9 0 L12.5 2.2 L9 4.5 Z" fill="#707068"/></svg>
<svg class="a" style="left:420.6px;top:46px" width="17" height="16.4" viewBox="0 0 17 16.4"><path d="M5 0.5 L12 0.5 L16.5 5 L16.5 11.5 L12 16 L5 16 L0.5 11.5 L0.5 5 Z" fill="#b4b2a8" stroke="#a4a298" stroke-width="0.6"/><path d="M5.5 5 L11.5 11.5 M11.5 5 L5.5 11.5" stroke="#f4f4f0" stroke-width="2.4"/></svg>
<div class="a" style="left:443.9px;top:42px;width:1px;height:23px;background:#b8b5a6;"></div><div class="a" style="left:444.9px;top:42px;width:1px;height:23px;background:#fbfaf6;"></div>
<div class="a" style="left:448.25px;top:40px;width:1px;height:27px;background:#a8a696;"></div><div class="a" style="left:449.25px;top:40px;width:1px;height:27px;background:#fff;"></div>
<svg class="a" style="left:454.4px;top:44.25px" width="18.1" height="18.75" viewBox="0 0 18.1 18.75"><rect x="0" y="0" width="18.1" height="18.75" fill="#e4f22e"/><rect x="0.6" y="0.6" width="16.9" height="17.55" fill="#0a7e0a"/><rect x="5.8" y="0" width="1" height="18.75" fill="#e4f22e"/><rect x="11.5" y="0" width="1" height="18.75" fill="#e4f22e"/><rect x="0" y="12.3" width="18.1" height="1" fill="#e4f22e"/><rect x="1.5" y="1.5" width="3" height="3" fill="#9ad48a"/></svg>
<svg class="a" style="left:480px;top:44.25px" width="18.1" height="18.75" viewBox="0 0 18.1 18.75"><rect x="0" y="0" width="18.1" height="18.75" fill="#e4f22e"/><rect x="0.6" y="0.6" width="16.9" height="17.55" fill="#0a7e0a"/><path d="M4.5 17 L4.5 4.3 L13.6 4.3 L13.6 17" fill="none" stroke="#e4f22e" stroke-width="3"/></svg>
<svg class="a" style="left:505.6px;top:44.8px" width="18.8" height="18.2" viewBox="0 0 18.8 18.2"><rect x="0" y="0" width="18.8" height="18.2" fill="#e4f22e"/><rect x="0.6" y="0.6" width="17.6" height="17" fill="#0a7e0a"/><rect x="9" y="2" width="1" height="15" fill="#e4f22e"/><rect x="1.5" y="8.8" width="15" height="1" fill="#e4f22e"/><path d="M7.8 3.5 L9.5 1.3 L11.2 3.5 Z" fill="#e4f22e"/><path d="M15 7.2 L17.3 9.3 L15 11.4 Z" fill="#e4f22e"/></svg>
<div class="a" style="left:57px;top:67.2px;width:903px;height:1.4px;background:#8e8c80;"></div>
<div class="a" style="left:57px;top:68.6px;width:903px;height:1.4px;background:#ffffff;"></div>

<!-- editor -->
<div class="a" style="left:57px;top:70px;width:903px;height:638px;background:#fff;"></div>
<div class="a" style="left:57px;top:70px;width:903px;height:1px;background:#7d8c8c;"></div>
<div class="a" style="left:57px;top:70px;width:2.2px;height:638px;background:#8a9a9a;"></div>
<div class="a" style="left:17px;top:708px;width:943px;height:1px;background:#efefef;"></div>
<div class="a" style="left:97.8px;top:708px;width:1.8px;height:12px;background:#303030;"></div>
<div class="a" style="left:59.2px;top:71px;width:40.8px;height:637px;background:#cfdbd0;"></div>
<div class="a" style="left:897.2px;top:70px;width:5.6px;height:638px;background:#ece9d8;border-left:1px solid #8c9494;border-right:1px solid #8c9494;box-sizing:border-box;"></div>

<div class="a ln" style="left:58px;top:0;width:35.3px;">
<div style="top:76.6px">1</div>
<div style="top:92.53px">2</div>
<div style="top:108.46px">3</div>
<div style="top:124.39px">4</div>
<div style="top:140.32px">5</div>
<div style="top:156.25px">6</div>
<div style="top:172.18px">7</div>
<div style="top:188.11px">8</div>
<div style="top:204.04px">9</div>
<div style="top:219.97px">10</div>
<div style="top:235.9px">11</div>
<div style="top:251.83px">12</div>
<div style="top:267.76px">13</div>
<div style="top:283.69px">14</div>
<div style="top:299.62px">15</div>
<div style="top:315.55px">16</div>
<div style="top:331.48px">17</div>
<div style="top:347.41px">18</div>
<div style="top:363.34px">19</div>
</div>
<div class="a code" style="left:104.4px;top:0;">
<div style="top:75.2px"><i class="c"><b>и</b></i><i class="c"><b>с</b></i><i class="c"><b>п</b></i><i class="c"><b>о</b></i><i class="c"><b>л</b></i><i class="c"><b>ь</b></i><i class="c"><b>з</b></i><i class="c"><b>о</b></i><i class="c"><b>в</b></i><i class="c"><b>а</b></i><i class="c"><b>т</b></i><i class="c"><b>ь</b></i><i class="c"></i><span class="g"><i class="c"><b>Р</b></i><i class="c"><b>о</b></i><i class="c"><b>б</b></i><i class="c"><b>о</b></i><i class="c"><b>т</b></i></span></div>
<div style="top:91.13px"><i class="c"><b>а</b></i><i class="c"><b>л</b></i><i class="c"><b>г</b></i></div>
<div style="top:107.06px"><i class="c"><b>н</b></i><i class="c"><b>а</b></i><i class="c"><b>ч</b></i></div>
<div style="top:122.99px"><i class="c cb"><b class="bl"></b></i><i class="c"></i><i class="c"><b>н</b></i><i class="c"><b>ц</b></i><i class="c"></i><i class="c"><b>п</b></i><i class="c"><b>о</b></i><i class="c"><b>к</b></i><i class="c"><b>а</b></i><i class="c"></i><i class="c"><b>н</b></i><i class="c"><b>е</b></i><i class="c"></i><span class="k"><i class="c"><b>с</b></i><i class="c"><b>в</b></i><i class="c"><b>е</b></i><i class="c"><b>р</b></i><i class="c"><b>х</b></i><i class="c"><b>у</b></i><i class="c"></i><i class="c"><b>с</b></i><i class="c"><b>в</b></i><i class="c"><b>о</b></i><i class="c"><b>б</b></i><i class="c"><b>о</b></i><i class="c"><b>д</b></i><i class="c"><b>н</b></i><i class="c"><b>о</b></i></span><i class="c"></i><i class="c"><b>и</b></i><i class="c"></i><span class="k"><i class="c"><b>с</b></i><i class="c"><b>п</b></i><i class="c"><b>р</b></i><i class="c"><b>а</b></i><i class="c"><b>в</b></i><i class="c"><b>а</b></i><i class="c"></i><i class="c"><b>с</b></i><i class="c"><b>в</b></i><i class="c"><b>о</b></i><i class="c"><b>б</b></i><i class="c"><b>о</b></i><i class="c"><b>д</b></i><i class="c"><b>н</b></i><i class="c"><b>о</b></i></span></div>
<div style="top:138.92px"><i class="c cb"><b class="bl"></b></i><i class="c"></i><i class="c cb"><b class="bl"></b></i><i class="c"></i><span class="k"><i class="c"><b>в</b></i><i class="c"><b>п</b></i><i class="c"><b>р</b></i><i class="c"><b>а</b></i><i class="c"><b>в</b></i><i class="c"><b>о</b></i></span></div>
<div style="top:154.85px"><i class="c cb"><b class="bl"></b></i><i class="c"></i><i class="c"><b>к</b></i><i class="c"><b>ц</b></i></div>
<div style="top:170.78px"><i class="c cb"><b class="bl"></b></i><i class="c"></i><i class="c"><b>н</b></i><i class="c"><b>ц</b></i><i class="c"></i><i class="c"><b>п</b></i><i class="c"><b>о</b></i><i class="c"><b>к</b></i><i class="c"><b>а</b></i><i class="c"></i><i class="c"><b>н</b></i><i class="c"><b>е</b></i><i class="c"></i><span class="k"><i class="c"><b>с</b></i><i class="c"><b>п</b></i><i class="c"><b>р</b></i><i class="c"><b>а</b></i><i class="c"><b>в</b></i><i class="c"><b>а</b></i><i class="c"></i><i class="c"><b>с</b></i><i class="c"><b>в</b></i><i class="c"><b>о</b></i><i class="c"><b>б</b></i><i class="c"><b>о</b></i><i class="c"><b>д</b></i><i class="c"><b>н</b></i><i class="c"><b>о</b></i></span></div>
<div style="top:186.71px"><i class="c cb"><b class="bl"></b></i><i class="c"></i><i class="c cb"><b class="bl"></b></i><i class="c"></i><span class="k"><i class="c"><b>в</b></i><i class="c"><b>н</b></i><i class="c"><b>и</b></i><i class="c"><b>з</b></i></span></div>
<div style="top:202.64px"><i class="c cb"><b class="bl"></b></i><i class="c"></i><i class="c"><b>к</b></i><i class="c"><b>ц</b></i></div>
<div style="top:218.57px"><i class="c cb"><b class="bl"></b></i><i class="c"></i><span class="k"><i class="c"><b>в</b></i><i class="c"><b>п</b></i><i class="c"><b>р</b></i><i class="c"><b>а</b></i><i class="c"><b>в</b></i><i class="c"><b>о</b></i></span></div>
<div style="top:234.5px"><i class="c cb"><b class="bl"></b></i><i class="c"></i><span class="k"><i class="c"><b>в</b></i><i class="c"><b>н</b></i><i class="c"><b>и</b></i><i class="c"><b>з</b></i></span></div>
<div style="top:250.43px"><i class="c cb"><b class="bl"></b></i><i class="c"></i><i class="c"><b>н</b></i><i class="c"><b>ц</b></i><i class="c"></i><i class="c"><b>п</b></i><i class="c"><b>о</b></i><i class="c"><b>к</b></i><i class="c"><b>а</b></i><i class="c"></i><i class="c"><b>н</b></i><i class="c"><b>е</b></i><i class="c"></i><span class="k"><i class="c"><b>с</b></i><i class="c"><b>л</b></i><i class="c"><b>е</b></i><i class="c"><b>в</b></i><i class="c"><b>а</b></i><i class="c"></i><i class="c"><b>с</b></i><i class="c"><b>в</b></i><i class="c"><b>о</b></i><i class="c"><b>б</b></i><i class="c"><b>о</b></i><i class="c"><b>д</b></i><i class="c"><b>н</b></i><i class="c"><b>о</b></i></span><i class="c"></i><i class="c"><b>и</b></i><i class="c"></i><span class="k"><i class="c"><b>с</b></i><i class="c"><b>н</b></i><i class="c"><b>и</b></i><i class="c"><b>з</b></i><i class="c"><b>у</b></i><i class="c"></i><i class="c"><b>с</b></i><i class="c"><b>в</b></i><i class="c"><b>о</b></i><i class="c"><b>б</b></i><i class="c"><b>о</b></i><i class="c"><b>д</b></i><i class="c"><b>н</b></i><i class="c"><b>о</b></i></span></div>
<div style="top:266.36px"><i class="c cb"><b class="bl"></b></i><i class="c"></i><i class="c cb"><b class="bl"></b></i><i class="c"></i><span class="k"><i class="c"><b>в</b></i><i class="c"><b>н</b></i><i class="c"><b>и</b></i><i class="c"><b>з</b></i></span></div>
<div style="top:282.29px"><i class="c cb"><b class="bl"></b></i><i class="c"></i><i class="c"><b>к</b></i><i class="c"><b>ц</b></i></div>
<div style="top:298.22px"><i class="c cb"><b class="bl"></b></i><i class="c"></i><i class="c"><b>н</b></i><i class="c"><b>ц</b></i><i class="c"></i><i class="c"><b>п</b></i><i class="c"><b>о</b></i><i class="c"><b>к</b></i><i class="c"><b>а</b></i><i class="c"></i><i class="c"><b>н</b></i><i class="c"><b>е</b></i><i class="c"></i><span class="k"><i class="c"><b>с</b></i><i class="c"><b>н</b></i><i class="c"><b>и</b></i><i class="c"><b>з</b></i><i class="c"><b>у</b></i><i class="c"></i><i class="c"><b>с</b></i><i class="c"><b>в</b></i><i class="c"><b>о</b></i><i class="c"><b>б</b></i><i class="c"><b>о</b></i><i class="c"><b>д</b></i><i class="c"><b>н</b></i><i class="c"><b>о</b></i></span><i class="c"></i><i class="c"><b>и</b></i><i class="c"></i><span class="k"><i class="c"><b>с</b></i><i class="c"><b>п</b></i><i class="c"><b>р</b></i><i class="c"><b>а</b></i><i class="c"><b>в</b></i><i class="c"><b>а</b></i><i class="c"></i><i class="c"><b>с</b></i><i class="c"><b>в</b></i><i class="c"><b>о</b></i><i class="c"><b>б</b></i><i class="c"><b>о</b></i><i class="c"><b>д</b></i><i class="c"><b>н</b></i><i class="c"><b>о</b></i></span></div>
<div style="top:314.15px"><i class="c cb"><b class="bl"></b></i><i class="c"></i><i class="c cb"><b class="bl"></b></i><i class="c"></i><span class="k"><i class="c"><b>в</b></i><i class="c"><b>п</b></i><i class="c"><b>р</b></i><i class="c"><b>а</b></i><i class="c"><b>в</b></i><i class="c"><b>о</b></i></span></div>
<div style="top:330.08px"><i class="c cb"><b class="bl"></b></i><i class="c"></i><i class="c"><b>к</b></i><i class="c"><b>ц</b></i></div>
<div style="top:346.01px"><i class="c"><b>к</b></i><i class="c"><b>о</b></i><i class="c"><b>н</b></i></div>
<div style="top:361.94px"></div>
</div>

<!-- blue window -->
<div class="a" style="left:520px;top:65.3px;width:432.5px;height:340.3px;background:#7b8ee0;border-radius:6px 6px 0 0;"></div>
<div class="a" style="left:520px;top:65px;width:432.5px;height:26.5px;border-radius:6px 6px 0 0;background:linear-gradient(to bottom,#7282c0 0px,#7486c4 1px,#9ab4f0 1.6px,#8ca6e8 3.5px,#7892dc 7px,#7890dc 14px,#7c9ce4 19px,#82a6ee 23.5px,#7488b8 25px,#7488b8 25.6px,#f4f4f8 25.7px);"></div>
<div class="a" style="left:525.8px;top:73.4px;width:12.5px;height:12.5px;background:#1c1c4c;border-radius:2.5px;box-shadow:0 0 0 0.8px #c0ccf0;"></div>
<div class="a" style="left:525.8px;top:72.6px;width:12.5px;text-align:center;font-size:10.5px;font-weight:bold;color:#f0e070;">K</div>
<div class="a" style="left:888.3px;top:70.8px;width:17.7px;height:17.3px;box-sizing:border-box;border:1.2px solid #b8c4f0;border-radius:3px;background:linear-gradient(135deg,#6a8cf0 0%,#5578e8 60%,#4a6ad8 100%);"></div>
<div class="a" style="left:892.8px;top:81.6px;width:6px;height:3px;background:#fff;"></div>
<div class="a" style="left:909.4px;top:70.8px;width:17.1px;height:17.3px;box-sizing:border-box;border:1.2px solid #9aace8;border-radius:3px;background:linear-gradient(135deg,#8aa2ec 0%,#7e98e6 100%);"></div>
<div class="a" style="left:913.6px;top:74.6px;width:8.7px;height:9.9px;box-sizing:border-box;border:1.2px solid #a8b8ec;border-top-width:2.6px;"></div>
<div class="a" style="left:929.5px;top:70.8px;width:18.3px;height:17.3px;box-sizing:border-box;border:1.2px solid #b8c4f0;border-radius:3px;background:linear-gradient(135deg,#d08898 0%,#c07080 100%);"></div>
<svg class="a" style="left:929.5px;top:70.8px" width="18.3" height="17.3"><path d="M5 4.5 L13.3 12.8 M13.3 4.5 L5 12.8" stroke="#fff" stroke-width="2"/></svg>
<div class="a menu" style="left:524px;top:91px;width:424px;height:17.7px;"></div>
<div class="a" style="left:524px;top:107.7px;width:424px;height:1.3px;background:#a8a696;"></div>
<div class="a" style="left:524px;top:399px;width:424px;height:4.5px;background:#e8e8f2;"></div>
<svg width="424" height="290" style="position:absolute;left:524px;top:109px" shape-rendering="crispEdges">
<rect x="0" y="0" width="424" height="290" fill="#000090"/>
<rect x="13" y="0" width="1" height="290" fill="#d4d4b4"/>
<rect x="40" y="0" width="1" height="290" fill="#d4d4b4"/>
<rect x="93" y="0" width="1" height="290" fill="#d4d4b4"/>
<rect x="120" y="0" width="1" height="290" fill="#d4d4b4"/>
<rect x="173" y="0" width="1" height="290" fill="#d4d4b4"/>
<rect x="200" y="0" width="1" height="290" fill="#d4d4b4"/>
<rect x="253" y="0" width="1" height="290" fill="#d4d4b4"/>
<rect x="280" y="0" width="1" height="290" fill="#d4d4b4"/>
<rect x="306" y="0" width="1" height="290" fill="#d4d4b4"/>
<rect x="333" y="0" width="1" height="290" fill="#d4d4b4"/>
<rect x="360" y="0" width="1" height="290" fill="#d4d4b4"/>
<rect x="386" y="0" width="1" height="290" fill="#d4d4b4"/>
<rect x="413" y="0" width="1" height="290" fill="#d4d4b4"/>
<rect x="0" y="15" width="424" height="1" fill="#d4d4b4"/>
<rect x="0" y="41" width="424" height="1" fill="#d4d4b4"/>
<rect x="0" y="67" width="424" height="1" fill="#d4d4b4"/>
<rect x="0" y="93" width="424" height="1" fill="#d4d4b4"/>
<rect x="0" y="119" width="424" height="1" fill="#d4d4b4"/>
<rect x="0" y="145" width="424" height="1" fill="#d4d4b4"/>
<rect x="0" y="171" width="424" height="1" fill="#d4d4b4"/>
<rect x="0" y="197" width="424" height="1" fill="#d4d4b4"/>
<rect x="0" y="223" width="424" height="1" fill="#d4d4b4"/>
<rect x="0" y="249" width="424" height="1" fill="#d4d4b4"/>
<rect x="0" y="275" width="424" height="1" fill="#d4d4b4"/>
<rect x="12" y="14" width="403" height="3" fill="#d6ce3e"/>
<rect x="12" y="274" width="403" height="3" fill="#d6ce3e"/>
<rect x="12" y="14" width="3" height="263" fill="#d6ce3e"/>
<rect x="412" y="14" width="3" height="263" fill="#d6ce3e"/>
<rect x="92" y="66" width="270" height="3" fill="#d6ce3e"/>
<rect x="92" y="248" width="270" height="3" fill="#d6ce3e"/>
<rect x="92" y="66" width="3" height="185" fill="#d6ce3e"/>
<rect x="359" y="66" width="3" height="185" fill="#d6ce3e"/>
<rect x="199" y="66" width="3" height="81" fill="#d6ce3e"/>
<rect x="199" y="170" width="3" height="81" fill="#d6ce3e"/>
<path shape-rendering="geometricPrecision" d="M 106.7 72.8 L 113.9 79.5 L 106.7 86.2 L 99.5 79.5 Z" fill="#e4e4ea" stroke="#303050" stroke-width="0.7"/>
</svg>

<!-- green window -->
<div class="a" style="left:109.3px;top:384.2px;width:439.2px;height:321.1px;background:#0a4ad8;border-radius:7px 7px 0 0;box-shadow:inset 1.2px 0 0 #0030b0,inset -1.2px 0 0 #0030b0,inset 0 -1.2px 0 #0030b0;"></div>
<div class="a" style="left:109.3px;top:384.2px;width:439.2px;height:26px;border-radius:7px 7px 0 0;background:linear-gradient(to bottom,#2a78f4 0%,#0a5af0 12%,#0650e6 50%,#0a58f0 85%,#0844d6 100%);"></div>
<svg class="a" style="left:114px;top:390.8px" width="15" height="14.4" viewBox="0 0 15 14.4"><rect x="0.6" y="0.6" width="13.8" height="13.2" rx="2.2" fill="#1c1c48" stroke="#d8e4fa" stroke-width="1.1"/><path d="M2.6 11.6 L2.6 5.6 C2.6 2.4, 12.4 2.4, 12.4 5.6 L12.4 11.6 Z" fill="#f0e08c"/><circle cx="5.6" cy="6" r="1.3" fill="#202020"/><circle cx="9.4" cy="6" r="1.3" fill="#202020"/><path d="M4.6 8.8 C6 10.4, 9 10.4, 10.4 8.8" fill="none" stroke="#202020" stroke-width="0.9"/></svg>
<div class="a" style="left:484.5px;top:389.4px;width:17.8px;height:17.3px;box-sizing:border-box;border:1.2px solid #ffffff;border-radius:3px;background:linear-gradient(135deg,#3c82ff 0%,#2663e8 60%,#1a50d0 100%);"></div>
<div class="a" style="left:489px;top:400.2px;width:6px;height:3px;background:#fff;"></div>
<div class="a" style="left:504.2px;top:389.4px;width:18.8px;height:17.3px;box-sizing:border-box;border:1.2px solid #ffffff;border-radius:3px;background:linear-gradient(135deg,#3c82ff 0%,#2663e8 60%,#1a50d0 100%);"></div>
<div class="a" style="left:508.4px;top:393.2px;width:10.4px;height:9.9px;box-sizing:border-box;border:1.2px solid #fff;border-top-width:2.6px;"></div>
<div class="a" style="left:525.3px;top:389.4px;width:18.3px;height:17.3px;box-sizing:border-box;border:1.2px solid #ffffff;border-radius:3px;background:linear-gradient(135deg,#f0805a 0%,#e05a34 60%,#c84420 100%);"></div>
<svg class="a" style="left:525.3px;top:389.4px" width="18.3" height="17.3"><path d="M5 4.5 L13.3 12.8 M13.3 4.5 L5 12.8" stroke="#fff" stroke-width="2"/></svg>
<div class="a" style="left:112.5px;top:409.6px;width:433px;height:292.5px;background:#c8ecfa;"></div>
<svg width="430" height="290" style="position:absolute;left:114px;top:411px" shape-rendering="crispEdges">
<rect x="0" y="0" width="430" height="290" fill="#2a932e"/>
<rect x="17" y="0" width="1" height="290" fill="#c6de3a"/>
<rect x="44" y="0" width="1" height="290" fill="#c6de3a"/>
<rect x="97" y="0" width="1" height="290" fill="#c6de3a"/>
<rect x="124" y="0" width="1" height="290" fill="#c6de3a"/>
<rect x="177" y="0" width="1" height="290" fill="#c6de3a"/>
<rect x="204" y="0" width="1" height="290" fill="#c6de3a"/>
<rect x="257" y="0" width="1" height="290" fill="#c6de3a"/>
<rect x="284" y="0" width="1" height="290" fill="#c6de3a"/>
<rect x="310" y="0" width="1" height="290" fill="#c6de3a"/>
<rect x="337" y="0" width="1" height="290" fill="#c6de3a"/>
<rect x="364" y="0" width="1" height="290" fill="#c6de3a"/>
<rect x="390" y="0" width="1" height="290" fill="#c6de3a"/>
<rect x="417" y="0" width="1" height="290" fill="#c6de3a"/>
<rect x="0" y="15" width="430" height="1" fill="#c6de3a"/>
<rect x="0" y="67" width="430" height="1" fill="#c6de3a"/>
<rect x="0" y="93" width="430" height="1" fill="#c6de3a"/>
<rect x="0" y="119" width="430" height="1" fill="#c6de3a"/>
<rect x="0" y="145" width="430" height="1" fill="#c6de3a"/>
<rect x="0" y="171" width="430" height="1" fill="#c6de3a"/>
<rect x="0" y="197" width="430" height="1" fill="#c6de3a"/>
<rect x="0" y="223" width="430" height="1" fill="#c6de3a"/>
<rect x="0" y="249" width="430" height="1" fill="#c6de3a"/>
<rect x="0" y="275" width="430" height="1" fill="#c6de3a"/>
<rect x="16" y="14" width="403" height="3" fill="#d2d61a"/>
<rect x="16" y="274" width="403" height="3" fill="#d2d61a"/>
<rect x="16" y="14" width="3" height="263" fill="#d2d61a"/>
<rect x="416" y="14" width="3" height="263" fill="#d2d61a"/>
<rect x="96" y="66" width="270" height="3" fill="#d2d61a"/>
<rect x="96" y="248" width="270" height="3" fill="#d2d61a"/>
<rect x="96" y="66" width="3" height="185" fill="#d2d61a"/>
<rect x="363" y="66" width="3" height="185" fill="#d2d61a"/>
<rect x="203" y="66" width="3" height="81" fill="#d2d61a"/>
<rect x="203" y="170" width="3" height="81" fill="#d2d61a"/>
<path shape-rendering="geometricPrecision" d="M 351 229.8 L 358.2 236.5 L 351 243.2 L 343.8 236.5 Z" fill="#e4e4ea" stroke="#303050" stroke-width="0.7"/>
</svg>

<div id="t_main" class="a ttl sx" style="left:75.17px;top:4.7px;font-size:12.5px;transform:scaleX(0.86);letter-spacing:0.41px;color:#e4ecfa;">Новая программа - Кумир</div>
<div id="t_blue" class="a ttl sx" style="left:542.1px;top:73px;font-size:13px;transform:scaleX(0.8);letter-spacing:0.7px;color:#dde6fa;">Обстановка - Нет файла *</div>
<div id="t_green" class="a ttl sx" style="left:132.13px;top:390.5px;font-size:13px;transform:scaleX(0.74);letter-spacing:1.42px;color:#ffffff;">Робот - временная</div>
<div id="m1" class="a mi sx" style="left:62.84px;top:26.6px;font-size:10px;transform:scaleX(0.92);">Программа</div>
<div id="m2" class="a mi sx" style="left:125.3px;top:26.6px;font-size:10px;transform:scaleX(1);">Редактирование</div>
<div id="m3" class="a mi sx" style="left:214.9px;top:26.6px;font-size:10px;transform:scaleX(0.99);">Вставка</div>
<div id="m4" class="a mi sx" style="left:265.32px;top:26.6px;font-size:10px;transform:scaleX(0.96);">Выполнение</div>
<div id="m5" class="a mi sx" style="left:335.31px;top:26.6px;font-size:10px;transform:scaleX(0.97);">Инструменты</div>
<div id="m6" class="a mi sx" style="left:409.11px;top:26.6px;font-size:10px;transform:scaleX(0.98);">Робот</div>
<div id="m7" class="a mi sx" style="left:450.74px;top:26.6px;font-size:10px;transform:scaleX(1.03);">Чертежник</div>
<div id="m8" class="a mi sx" style="left:515.35px;top:26.6px;font-size:10px;transform:scaleX(0.9);">Инфо</div>
<div id="m9" class="a mi sx" style="left:552.81px;top:26.6px;font-size:10px;transform:scaleX(0.97);">Миры</div>
<div id="m10" class="a mi sx" style="left:529.5px;top:94.8px;font-size:10px;transform:scaleX(0.99);">Обстановка</div>
<div id="m11" class="a mi sx" style="left:599.77px;top:94.8px;font-size:10px;transform:scaleX(0.86);">Помощь</div>
</body></html>
